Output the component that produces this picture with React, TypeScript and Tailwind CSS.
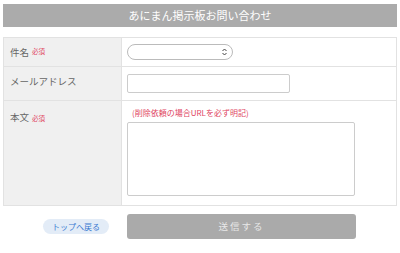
// Contact form for the anime board

export default function App() {
  const labelCls = 'bg-[#f0f0f0] border-r border-[#e2e2e2] pl-[6px] text-[9.5px] text-[#666]';
  return (
    <div className="w-[400px] h-[253px] bg-white pt-[4px] px-[3px]" style={{ fontFamily: '"Noto Sans CJK JP", "Noto Sans", sans-serif' }}>
      <div className="h-[23px] bg-[#ababab] flex items-center justify-center text-white text-[11px]">
        あにまん掲示板お問い合わせ
      </div>

      <div className="mt-[10px] border border-[#e2e2e2] grid grid-cols-[118px_1fr]">
        {/* 件名 */}
        <div className={`${labelCls} h-[29px] flex items-center border-b`}>
          件名<span className="ml-[3px] text-[6.5px] text-[#e0455f]">必須</span>
        </div>
        <div className="h-[29px] border-b border-[#e2e2e2] flex items-center pl-[5px]">
          <div className="w-[106px] h-[16px] border border-[#bbb] rounded-full flex items-center justify-end pr-[4px]">
            <svg width="7" height="8" viewBox="0 0 7 8" fill="none" stroke="#444" strokeWidth="1">
              <path d="M1.5 3 L3.5 1 L5.5 3" />
              <path d="M1.5 5 L3.5 7 L5.5 5" />
            </svg>
          </div>
        </div>

        {/* メールアドレス */}
        <div className={`${labelCls} h-[34px] pt-[7px] border-b`}>メールアドレス</div>
        <div className="h-[34px] border-b border-[#e2e2e2] pl-[5px] pt-[7px]">
          <div className="w-[163px] h-[19px] border border-[#ccc] rounded-[2px]" />
        </div>

        {/* 本文 */}
        <div className={`${labelCls} h-[104px] pt-[9px]`}>
          本文<span className="ml-[3px] text-[6.5px] text-[#e0455f]">必須</span>
        </div>
        <div className="h-[104px] pl-[5px] pt-[7px]">
          <div className="text-[8px] text-[#e0455f] leading-[10px] pl-[5px]">(削除依頼の場合URLを必ず明記)</div>
          <div className="mt-[4px] w-[228px] h-[74px] border border-[#ccc] rounded-[2px]" />
        </div>
      </div>

      <div className="mt-[8px] grid grid-cols-[118px_1fr]">
        <div className="flex justify-end items-center pr-[12px]">
          <span className="bg-[#e3ecf7] text-[#3b7ad1] text-[8px] rounded-full px-[9px] h-[15px] flex items-center">トップへ戻る</span>
        </div>
        <div className="pl-[6px]">
          <div className="w-[229px] h-[25px] bg-[#aaaaaa] rounded-[3px] flex items-center justify-center text-[#e8e8e8] text-[9.5px] tracking-[2px]">
            送信する
          </div>
        </div>
      </div>
    </div>
  );
}
